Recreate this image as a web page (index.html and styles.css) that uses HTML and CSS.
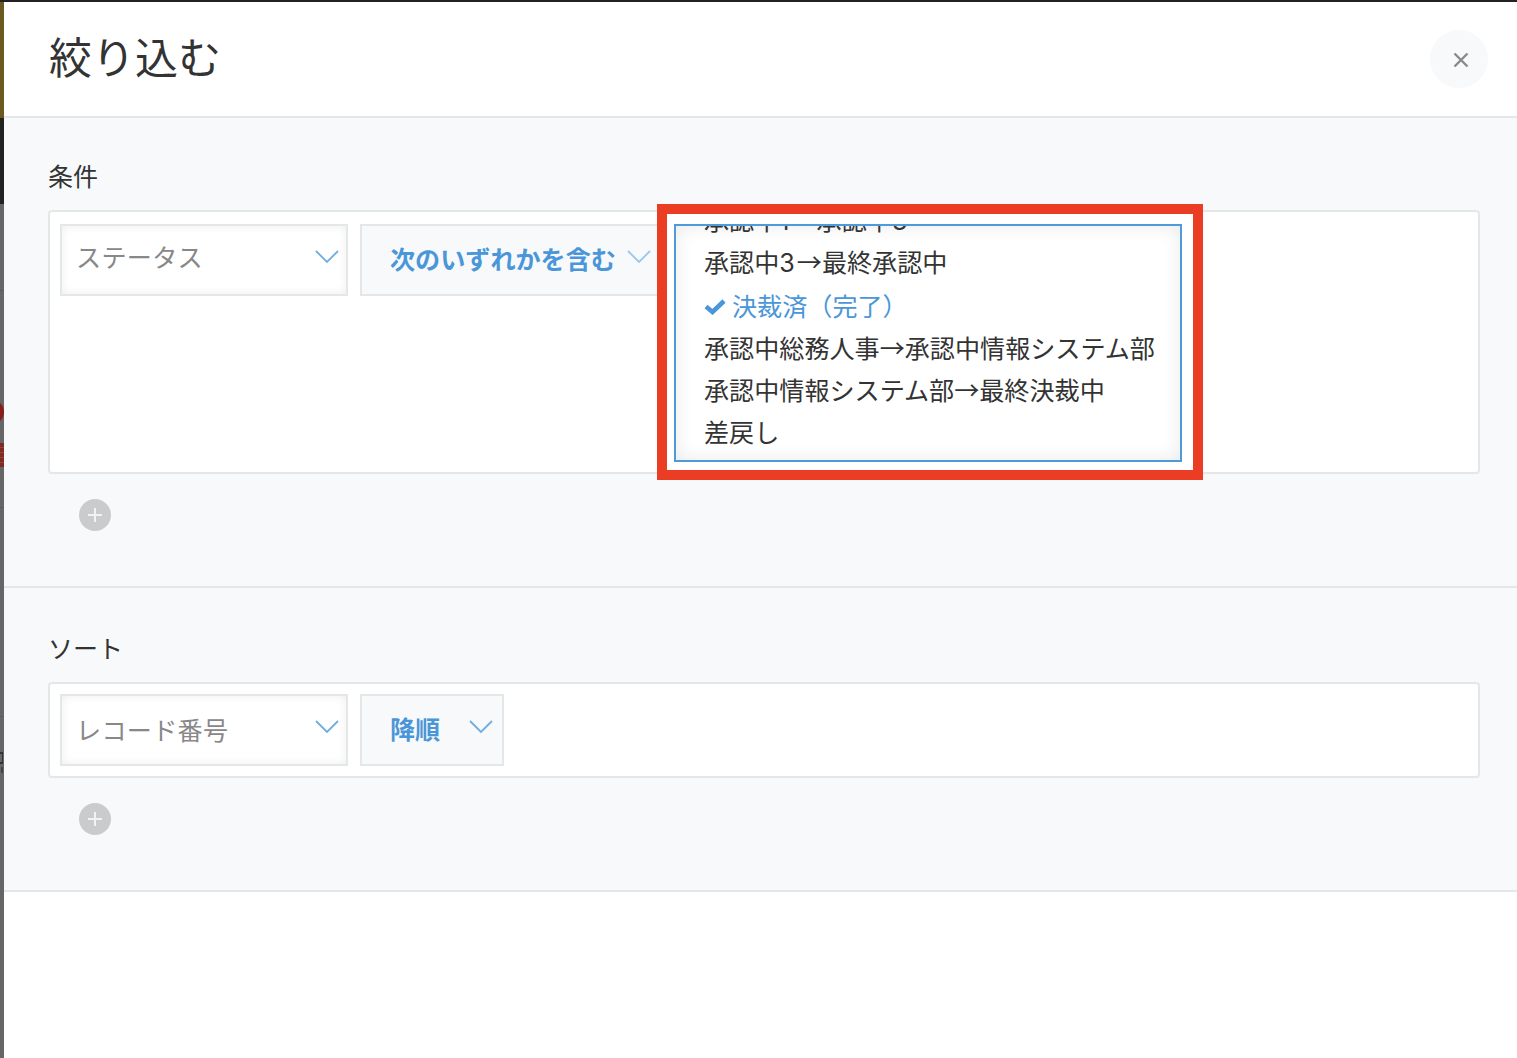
FILE: index.html
```html
<!DOCTYPE html>
<html lang="ja">
<head>
    <meta charset="UTF-8">
    <meta name="viewport" content="width=device-width, initial-scale=1.0">
    <title>絞り込む</title>
    <link rel="stylesheet" href="styles.css">
</head>
<body>
    <div class="top-edge"></div>
    <div class="layout">
        <!-- sliver of the page behind the dialog -->
        <svg class="backdrop" width="4" height="1056" viewBox="0 2 4 1056">
            <rect x="0" y="2" width="4" height="116" fill="#6b5a20"/>
            <rect x="0" y="118" width="4" height="86" fill="#222222"/>
            <rect x="0" y="204" width="4" height="854" fill="#666666"/>
            <rect x="0" y="290" width="4" height="1" fill="#5c5c5c"/>
            <circle cx="-8" cy="412" r="12" fill="#8a1c1c"/>
            <rect x="0" y="443" width="4" height="24" fill="#7f2a25"/>
            <rect x="0" y="447" width="4" height="1" fill="#93443c"/>
            <rect x="0" y="452" width="4" height="1" fill="#93443c"/>
            <rect x="0" y="457" width="4" height="1" fill="#93443c"/>
            <rect x="0" y="462" width="4" height="1" fill="#93443c"/>
            <rect x="0" y="507" width="4" height="1" fill="#5c5c5c"/>
            <rect x="0" y="716" width="4" height="1" fill="#5c5c5c"/>
            <rect x="0" y="752" width="3" height="2" fill="#333333"/>
            <rect x="2" y="754" width="1" height="9" fill="#333333"/>
            <rect x="0" y="762" width="3" height="2" fill="#333333"/>
            <rect x="1" y="767" width="2" height="6" fill="#444444"/>
        </svg>

        <div class="dialog">
            <div class="header">
                <h1>絞り込む</h1>
                <button class="close">
                    <svg width="16" height="16" viewBox="0 0 16 16"><path d="M1.5 1.5 L14.5 14.5 M14.5 1.5 L1.5 14.5" stroke="#8a8a8a" stroke-width="2.4" fill="none"/></svg>
                </button>
            </div>

            <div class="section">
                <div class="section-label">条件</div>
                <div class="card card-tall">
                    <div class="field field-name">
                        <span>ステータス</span>
                        <svg class="chevron" width="24" height="14" viewBox="0 0 24 14"><path d="M1 1 L12 12 L23 1" stroke="#70aee1" stroke-width="1.8" fill="none"/></svg>
                    </div>
                    <div class="field field-op field-op-long">
                        <span>次のいずれかを含む</span>
                        <svg class="chevron" width="24" height="14" viewBox="0 0 24 14"><path d="M1 1 L12 12 L23 1" stroke="#9cc6ea" stroke-width="1.8" fill="none"/></svg>
                    </div>

                    <div class="callout">
                        <div class="listbox">
                            <div class="option option-first">承認中<span class="digit">1</span>→承認中<span class="digit">3</span></div>
                            <div class="option">承認中<span class="digit">3</span>→最終承認中</div>
                            <div class="option option-selected">
                                <svg width="22" height="17" viewBox="0 0 22 17"><path d="M2 8.5 L8.5 14 L20 3" stroke="#4a96d8" stroke-width="4.6" fill="none"/></svg>
                                <span>決裁済（完了）</span>
                            </div>
                            <div class="option">承認中総務人事→承認中情報システム部</div>
                            <div class="option">承認中情報システム部→最終決裁中</div>
                            <div class="option">差戻し</div>
                        </div>
                    </div>
                </div>
                <button class="add">
                    <svg width="16" height="16" viewBox="0 0 16 16"><path d="M8 1 V15 M1 8 H15" stroke="#f2f2f2" stroke-width="2" fill="none"/></svg>
                </button>
            </div>

            <div class="section section-sort">
                <div class="section-label">ソート</div>
                <div class="card">
                    <div class="field field-name">
                        <span>レコード番号</span>
                        <svg class="chevron" width="24" height="14" viewBox="0 0 24 14"><path d="M1 1 L12 12 L23 1" stroke="#70aee1" stroke-width="1.8" fill="none"/></svg>
                    </div>
                    <div class="field field-op field-op-short">
                        <span>降順</span>
                        <svg class="chevron" width="24" height="14" viewBox="0 0 24 14"><path d="M1 1 L12 12 L23 1" stroke="#70aee1" stroke-width="1.8" fill="none"/></svg>
                    </div>
                </div>
                <button class="add">
                    <svg width="16" height="16" viewBox="0 0 16 16"><path d="M8 1 V15 M1 8 H15" stroke="#f2f2f2" stroke-width="2" fill="none"/></svg>
                </button>
            </div>
        </div>
    </div>
</body>
</html>
```

FILE: styles.css
```css
html, body {
    height: 100%;
}

body {
    margin: 0;
    background: #fff;
    color: #333;
    font-family: "Noto Sans CJK JP", "Noto Sans", sans-serif;
    overflow: hidden;
}

.top-edge {
    height: 2px;
    background: #222;
}

.layout {
    display: flex;
    height: 1056px;
}

.backdrop {
    display: block;
    flex: none;
}

.dialog {
    flex: 1;
    min-width: 0;
}

.header {
    display: flex;
    align-items: center;
    justify-content: space-between;
    height: 114px;
    padding: 0 29px 0 45px;
    border-bottom: 2px solid #e3e7e8;
}

.header h1 {
    margin: 0 0 8px;
    font-size: 43px;
    font-weight: 400;
    line-height: 60px;
}

.close {
    display: flex;
    align-items: center;
    justify-content: center;
    width: 58px;
    height: 58px;
    padding: 2px 0 0 3px;
    border: none;
    border-radius: 50%;
    background: #f7f9fa;
}

.section {
    padding: 40px 37px 55px 44px;
    background: #f7f9fa;
    border-bottom: 2px solid #e3e7e8;
}

.section-sort {
    padding-top: 42px;
}

.section-label {
    margin-bottom: 18px;
    font-size: 25px;
    line-height: 34px;
}

.card {
    position: relative;
    display: flex;
    align-items: flex-start;
    gap: 12px;
    padding: 10px;
    background: #fff;
    border: 2px solid #e3e7e8;
    border-radius: 4px;
}

.card-tall {
    height: 238px;
    padding-top: 12px;
}

.field {
    display: flex;
    align-items: center;
    justify-content: space-between;
    box-sizing: border-box;
    height: 72px;
    padding-bottom: 2px;
    border: 2px solid #e3e7e8;
    font-size: 25.1px;
    white-space: nowrap;
}

.field-name {
    width: 288px;
    padding-left: 14px;
    padding-right: 7px;
    color: #888;
    letter-spacing: 0.3px;
    background: #fff;
    box-shadow: inset 0 0 10px rgba(0, 0, 0, 0.07);
}

.field-op {
    padding-left: 28px;
    padding-right: 9px;
    color: #4a96d8;
    font-weight: 700;
    background: #f7f9fa;
}

.field-op span {
    margin-bottom: 2px;
}

.card-tall .field-name span {
    margin-bottom: 6px;
}

.field-op-long {
    width: 302px;
}

.field-op-short {
    width: 144px;
}

.chevron {
    flex: none;
    margin-top: -4px;
}

.add {
    display: flex;
    align-items: center;
    justify-content: center;
    width: 32px;
    height: 32px;
    margin: 25px 0 0 31px;
    padding: 0;
    border: none;
    border-radius: 50%;
    background: #c9cbcc;
}

/* red annotation around the open list */
.callout {
    position: absolute;
    left: 607px;
    top: -8px;
    box-sizing: border-box;
    width: 546px;
    height: 276px;
    padding: 10px 11px 7px 7px;
    background: #fff;
    border: 10px solid #ea3d24;
}

.listbox {
    box-sizing: border-box;
    height: 238px;
    overflow: hidden;
    border: 2px solid #4f9bd9;
    background: #fff;
    box-shadow: inset 0 0 18px rgba(0, 0, 0, 0.09);
    font-size: 25.1px;
    white-space: nowrap;
}

.digit {
    font-family: "Inter", sans-serif;
    letter-spacing: 2px;
}

.option {
    height: 42px;
    padding-left: 28px;
    line-height: 42px;
}

.option-first {
    margin-top: -28px;
}

.option-selected {
    display: flex;
    align-items: center;
    gap: 6px;
    box-sizing: border-box;
    height: 44px;
    padding-top: 2px;
    color: #4a96d8;
}

.option-selected svg {
    margin-top: 3px;
}
```
